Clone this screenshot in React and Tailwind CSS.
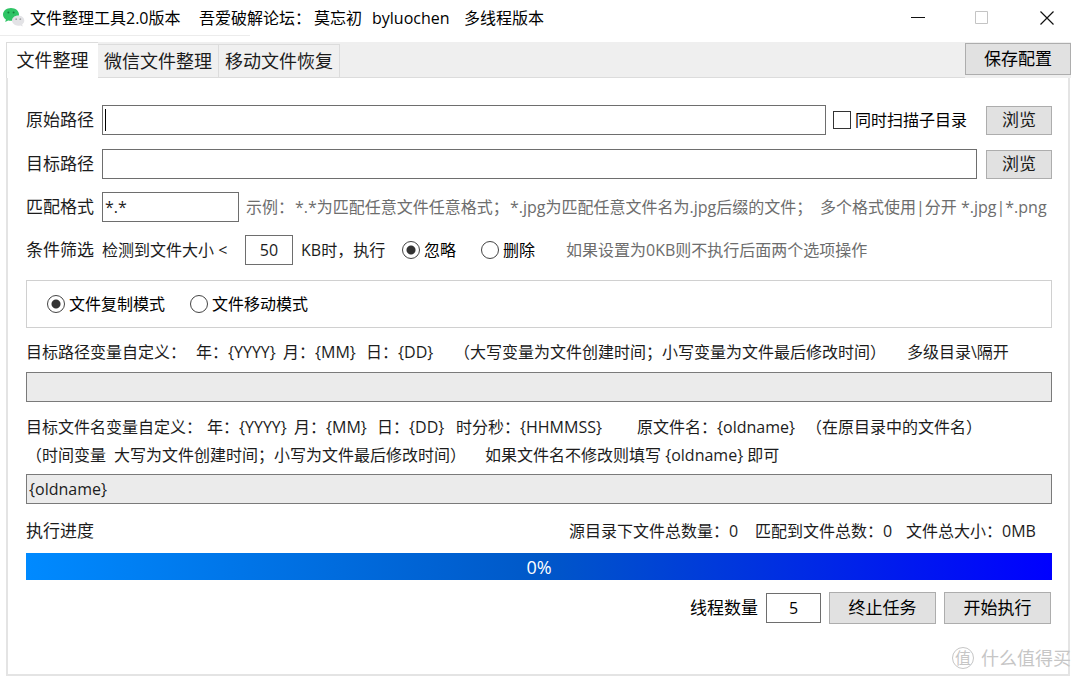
import React, { useState } from 'react';

const TABS = ['文件整理', '微信文件整理', '移动文件恢复'];

const inputClass = 'h-[30px] border border-[#6e6e6e] bg-white px-[2px] text-[16px] outline-none';
const buttonClass = 'shrink-0 border border-[#adadad] bg-[#e1e1e1] whitespace-nowrap hover:border-[#0078d7] hover:bg-[#e5f1fb]';

const WechatIcon = () => (
  <svg className="h-[20px] w-[22px] shrink-0" viewBox="0 0 22 20" aria-hidden="true">
    <path d="M8 0C3.600 0 0 2.800 0 6.400c0 2 1.100 3.800 2.900 5L2.200 14l3-1.500c.9.200 1.800.3 2.800.3 4.400 0 8-2.800 8-6.400S12.400 0 8 0z" fill="#2fc465" />
    <circle cx="5.400" cy="4.500" r="1" fill="#14803c" />
    <circle cx="10.600" cy="4.500" r="1" fill="#14803c" />
    <path d="M15.200 7.500c-3.500 0-6.200 2.300-6.200 5.100s2.700 5.100 6.200 5.100c.8 0 1.500-.1 2.200-.3l2.300 1.200-.5-2.100c1.300-1 2.100-2.300 2.100-3.900 0-2.800-2.700-5.100-6.100-5.100z" fill="#e3e3e6" />
    <circle cx="13.200" cy="11.200" r=".9" fill="#a5a5a8" />
    <circle cx="17.300" cy="11.200" r=".9" fill="#a5a5a8" />
  </svg>
);

const TitleBar = () => (
  <header className="flex h-[35px] items-center pl-[3px] text-black">
    <WechatIcon />
    <h1 className="flex flex-1 gap-[9px] pl-[5px] text-[16px] whitespace-nowrap">
      <span className="w-[160px]">文件整理工具2.0版本</span>
      <span className="w-[106px]">吾爱破解论坛：</span>
      <span className="w-[49px]">莫忘初</span>
      <span className="w-[83px]">byluochen</span>
      <span>多线程版本</span>
    </h1>
    <div className="flex">
      <button type="button" aria-label="最小化" className="flex h-[34px] w-[64px] items-center justify-center">
        <svg className="size-[14px]" viewBox="0 0 14 14" stroke="#111" fill="none">
          <path d="M0 6.500h14" />
        </svg>
      </button>
      <button type="button" aria-label="最大化" disabled className="flex h-[34px] w-[64px] items-center justify-center">
        <svg className="size-[14px]" viewBox="0 0 14 14" stroke="#c4c4c4" fill="none">
          <path d="M.5.5h12v12H.5z" />
        </svg>
      </button>
      <button type="button" aria-label="关闭" className="flex h-[34px] w-[66px] items-center justify-center">
        <svg className="size-[14px]" viewBox="0 0 14 14" stroke="#111" strokeWidth="1.200" fill="none">
          <path d="M.5.5l13 13M13.500.5l-13 13" />
        </svg>
      </button>
    </div>
  </header>
);

const Radio = ({ name, label, checked, onChange }) => (
  <label className="flex items-center gap-[4px] whitespace-nowrap text-black">
    <input
      type="radio"
      name={name}
      checked={checked}
      onChange={onChange}
      className="size-[18px] shrink-0 appearance-none rounded-full border border-[#444] bg-white checked:bg-[radial-gradient(circle,#333_4px,#fff_5px)]"
    />
    {label}
  </label>
);

const App = () => {
  const [tab, setTab] = useState(TABS[0]);
  const [source, setSource] = useState('');
  const [target, setTarget] = useState('');
  const [subDirs, setSubDirs] = useState(false);
  const [pattern, setPattern] = useState('*.*');
  const [size, setSize] = useState('50');
  const [action, setAction] = useState('忽略');
  const [mode, setMode] = useState('文件复制模式');
  const [threads, setThreads] = useState('5');

  return (
    <div className="flex min-h-screen flex-col bg-white pb-[5px] font-['Open_Sans','Noto_Sans_CJK_SC',sans-serif] text-[17px] leading-[24px] text-[#1c1c1c]">
      <TitleBar />
      <div className="h-[7px] w-[250px] border-t border-[#ececec]" />

      <div className="mr-[9px] ml-[6px] flex h-[36px] items-start bg-[#efefef]">
        <div role="tablist" className="flex h-[36px] flex-1 items-end text-[18px] whitespace-nowrap">
          {TABS.map((name) => (
            <button
              key={name}
              type="button"
              role="tab"
              aria-selected={tab === name}
              onClick={() => setTab(name)}
              className={
                tab === name
                  ? 'h-[36px] w-[92px] border-t border-l border-[#dcdcdc] bg-white pb-[2px]'
                  : 'h-[34px] w-[121px] border border-l-0 border-[#dcdcdc] bg-[#f0f0f0]'
              }
            >
              {name}
            </button>
          ))}
          <div className="h-full flex-1 border-b border-[#dcdcdc]" />
        </div>
        <button type="button" className={`${buttonClass} mt-px h-[32px] w-[106px] text-black`}>保存配置</button>
      </div>

      <main className="relative mr-[10px] ml-[6px] flex flex-1 flex-col border-x-2 border-b-2 border-[#e4e4e4] pt-[27px] pr-[16px] pl-[18px]">
        <div className="flex items-center">
          <label htmlFor="source" className="w-[76px]">原始路径</label>
          <div className="relative flex flex-1">
            <input id="source" value={source} onChange={(e) => setSource(e.target.value)} className={`${inputClass} w-full`} />
            <span className="absolute top-[4px] left-[3px] h-[22px] w-px bg-black" />
          </div>
          <label className="ml-[7px] flex w-[153px] items-center gap-[4px] text-[16px] whitespace-nowrap text-black">
            <input
              type="checkbox"
              checked={subDirs}
              onChange={(e) => setSubDirs(e.target.checked)}
              className="size-[18px] appearance-none border border-[#333] bg-white checked:bg-[#333]"
            />
            同时扫描子目录
          </label>
          <button type="button" className={`${buttonClass} h-[29px] w-[66px]`}>浏览</button>
        </div>

        <div className="mt-[14px] flex items-center">
          <label htmlFor="target" className="w-[76px]">目标路径</label>
          <input id="target" value={target} onChange={(e) => setTarget(e.target.value)} className={`${inputClass} min-w-0 flex-1`} />
          <button type="button" className={`${buttonClass} ml-[9px] h-[29px] w-[66px]`}>浏览</button>
        </div>

        <div className="mt-[13px] flex items-center">
          <label htmlFor="pattern" className="w-[76px]">匹配格式</label>
          <input id="pattern" value={pattern} onChange={(e) => setPattern(e.target.value)} className={`${inputClass} w-[137px]`} />
          <p className="ml-[7px] flex text-[16px] whitespace-nowrap text-[#6d6d6d]">
            <span className="w-[49px]">示例：</span>
            <span className="w-[215px]">*.*为匹配任意文件任意格式；</span>
            <span className="w-[310px]">*.jpg为匹配任意文件名为.jpg后缀的文件；</span>
            <span>多个格式使用|分开 *.jpg|*.png</span>
          </p>
        </div>

        <div className="mt-[13px] flex items-center whitespace-nowrap">
          <span className="w-[76px]">条件筛选</span>
          <label htmlFor="size" className="w-[143px] text-[16px]">检测到文件大小 &lt;</label>
          <input id="size" value={size} onChange={(e) => setSize(e.target.value)} className={`${inputClass} w-[48px] text-center`} />
          <span className="ml-[8px] w-[101px] text-[16px]">KB时，执行</span>
          <div className="flex w-[164px] gap-[25px] text-[16px]">
            <Radio name="action" label="忽略" checked={action === '忽略'} onChange={() => setAction('忽略')} />
            <Radio name="action" label="删除" checked={action === '删除'} onChange={() => setAction('删除')} />
          </div>
          <p className="text-[16px] text-[#6d6d6d]">如果设置为0KB则不执行后面两个选项操作</p>
        </div>

        <div className="mt-[15px] flex h-[48px] items-center gap-[25px] border border-[#d0d0d0] pl-[20px] text-[16px]">
          <Radio name="mode" label="文件复制模式" checked={mode === '文件复制模式'} onChange={() => setMode('文件复制模式')} />
          <Radio name="mode" label="文件移动模式" checked={mode === '文件移动模式'} onChange={() => setMode('文件移动模式')} />
        </div>

        <label htmlFor="dirRule" className="mt-[12px] grid grid-cols-[170px_87px_83px_88px_453px_1fr] text-[16px] whitespace-nowrap">
          <span>目标路径变量自定义：</span>
          <span>年：{'{YYYY}'}</span>
          <span>月：{'{MM}'}</span>
          <span>日：{'{DD}'}</span>
          <span>（大写变量为文件创建时间；小写变量为文件最后修改时间）</span>
          <span>多级目录\隔开</span>
        </label>
        <input id="dirRule" disabled className="mt-[8px] h-[30px] border border-[#7a7a7a] bg-[#ebebeb] px-[2px]" />

        <label htmlFor="nameRule" className="mt-[11px] text-[16px] leading-[28px] whitespace-nowrap">
          <span className="grid grid-cols-[181px_87px_83px_79px_181px_169px_1fr]">
            <span>目标文件名变量自定义：</span>
            <span>年：{'{YYYY}'}</span>
            <span>月：{'{MM}'}</span>
            <span>日：{'{DD}'}</span>
            <span>时分秒：{'{HHMMSS}'}</span>
            <span>原文件名：{'{oldname}'}</span>
            <span>（在原目录中的文件名）</span>
          </span>
          <span className="grid grid-cols-[88px_371px_1fr]">
            <span>（时间变量</span>
            <span>大写为文件创建时间；小写为文件最后修改时间）</span>
            <span>如果文件名不修改则填写 {'{oldname}'} 即可</span>
          </span>
        </label>
        <input id="nameRule" disabled value="{oldname}" className="mt-[5px] h-[30px] border border-[#7a7a7a] bg-[#ebebeb] px-[2px] text-[16px]" />

        <div className="mt-[15px] flex items-center justify-between">
          <span>执行进度</span>
          <p className="flex gap-[11px] pr-[7px] text-[16px] whitespace-nowrap">
            <span className="w-[175px]">源目录下文件总数量：0</span>
            <span className="w-[140px]">匹配到文件总数：0</span>
            <span className="w-[139px]">文件总大小：0MB</span>
          </p>
        </div>
        <div
          role="progressbar"
          aria-label="执行进度"
          aria-valuenow={0}
          className="mt-[10px] flex h-[27px] items-center justify-center bg-[linear-gradient(90deg,#008aff,#0058c8,#0000ff)] text-[18px] text-white"
        >
          0%
        </div>

        <div className="mt-[12px] flex items-center justify-end gap-[8px] pr-px text-black">
          <label htmlFor="threads">线程数量</label>
          <input id="threads" value={threads} onChange={(e) => setThreads(e.target.value)} className={`${inputClass} w-[55px] text-center`} />
          <button type="button" className={`${buttonClass} h-[32px] w-[107px]`}>终止任务</button>
          <button type="button" className={`${buttonClass} h-[32px] w-[107px]`}>开始执行</button>
        </div>

        <div className="absolute -right-[3px] bottom-[4px] flex items-center gap-[7px] text-[18px] whitespace-nowrap text-[#c6c6c6]">
          <span className="flex size-[22px] items-center justify-center rounded-full border border-[#c6c6c6] text-[16px]">值</span>
          <span>什么值得买</span>
        </div>
      </main>
    </div>
  );
};

export default App;
